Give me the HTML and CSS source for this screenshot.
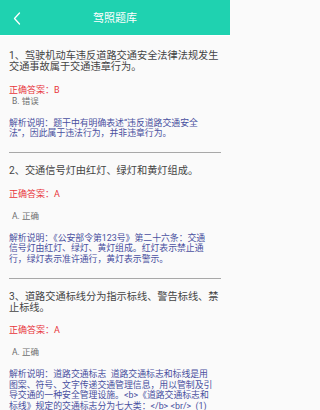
FILE: index.html
```html
<!DOCTYPE html>
<html lang="zh-CN">
<head>
<meta charset="utf-8">
<title>驾照题库</title>
<link rel="stylesheet" href="styles.css">
</head>
<body>
<header class="bar">
  <span class="back"><svg width="8" height="13" viewBox="0 0 8 13"><path d="M6.5 1 L1.5 6.5 L6.5 12" fill="none" stroke="#fff" stroke-width="1.3" stroke-linecap="round" stroke-linejoin="round"/></svg></span>
  <h1 class="title">驾照题库</h1>
</header>
<main class="list">
  <section class="item">
    <p class="q">1、驾驶机动车违反道路交通安全法律法规发生交通事故属于交通违章行为。</p>
    <p class="ans">正确答案：B</p>
    <p class="opt opt-tight">B. 错误</p>
    <p class="exp">解析说明：题干中有明确表述“违反道路交通安全<br>法”，因此属于违法行为，并非违章行为。</p>
  </section>
  <section class="item">
    <p class="q">2、交通信号灯由红灯、绿灯和黄灯组成。</p>
    <p class="ans">正确答案：A</p>
    <p class="opt">A. 正确</p>
    <p class="exp">解析说明：《公安部令第123号》第二十六条：交通<br>信号灯由红灯、绿灯、黄灯组成。红灯表示禁止通<br>行，绿灯表示准许通行，黄灯表示警示。</p>
  </section>
  <section class="item">
    <p class="q">3、道路交通标线分为指示标线、警告标线、禁止标线。</p>
    <p class="ans">正确答案：A</p>
    <p class="opt">A. 正确</p>
    <p class="exp">解析说明：道路交通标志&nbsp;&nbsp;道路交通标志和标线是用<br>图案、符号、文字传递交通管理信息，用以管制及引<br>导交通的一种安全管理设施。&lt;b&gt;《道路交通标志和<br>标线》规定的交通标志分为七大类：&lt;/b&gt; &lt;br/&gt;&nbsp;&nbsp;(1)</p>
  </section>
</main>
</body>
</html>
```
FILE: styles.css
```css
html, body {
  margin: 0;
  padding: 0;
}
body {
  width: 230px;
  height: 410px;
  overflow: hidden;
  background: #fafafa;
  font-family: Roboto, "Noto Sans CJK SC", sans-serif;
}
.bar {
  height: 35px;
  background: #1fd2b0;
  display: flex;
  align-items: center;
  justify-content: center;
  position: relative;
  border-bottom: 1px solid #ffffff;
}
.back {
  position: absolute;
  left: 13px;
  top: 12px;
  display: flex;
}
.title {
  margin: 0;
  padding-top: 2px;
  font-size: 11px;
  font-weight: normal;
  color: #ffffff;
  line-height: 14px;
}
.list {
  padding: 14px 9px 0 9px;
}
.item {
  border-bottom: 1px solid #a8a8a8;
  padding-bottom: 13.5px;
  margin-bottom: 12px;
}
.item p {
  margin: 0;
}
.q {
  font-size: 10.2px;
  line-height: 11px;
  color: #444444;
  margin-bottom: 12.5px !important;
}
.ans {
  font-size: 9px;
  line-height: 11px;
  color: #e8353b;
}
.opt {
  font-size: 8.5px;
  line-height: 11px;
  color: #6e6e6e;
  padding-left: 3px;
  margin-top: 11px !important;
}
.opt-tight {
  margin-top: 0 !important;
}
.exp {
  font-size: 8.85px;
  line-height: 10.5px;
  color: #4950a0;
  margin-top: 11px !important;
  white-space: nowrap;
}
```
